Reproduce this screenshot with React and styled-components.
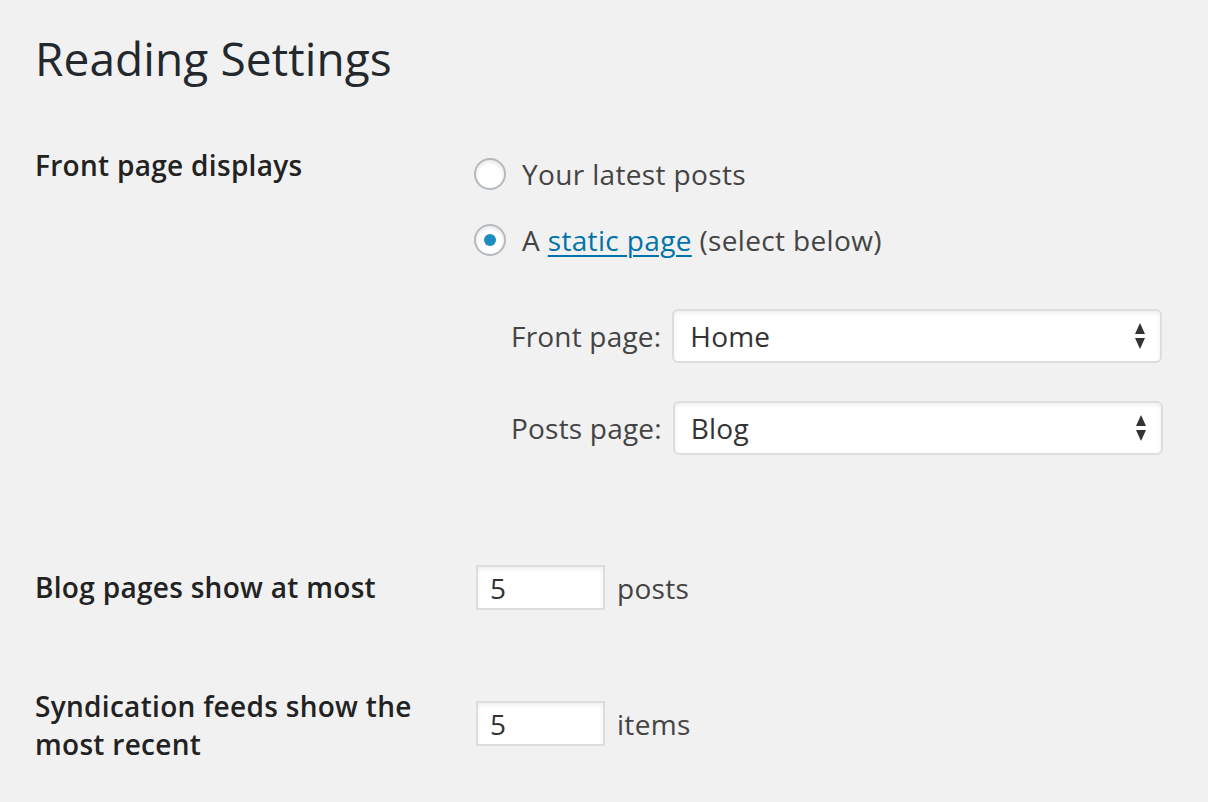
import styled, { createGlobalStyle } from "styled-components";

const GlobalStyle = createGlobalStyle`
  html, body {
    margin: 0;
    padding: 0;
    background: #f1f1f1;
  }
  body {
    font-family: "Open Sans", "Liberation Sans", sans-serif;
    color: #444;
  }
`;

function Radio({ checked, children }) {
  return (
    <RadioRow>
      <RadioCircle $checked={checked} />
      <RadioText>{children}</RadioText>
    </RadioRow>
  );
}

function Select({ value }) {
  return (
    <SelectBox>
      <span>{value}</span>
      <Arrows width="10" height="26" viewBox="0 0 10 26">
        <path d="M5 0 L10 11 L0 11 Z" fill="#333" />
        <path d="M0 15 L10 15 L5 26 Z" fill="#333" />
      </Arrows>
    </SelectBox>
  );
}

function App() {
  return (
    <>
      <GlobalStyle />
      <Wrap>
        <Title>Reading Settings</Title>

        <Row $gap={0}>
          <Label $pad={56}>Front page displays</Label>
          <Field $pad={51}>
            <Radio>Your latest posts</Radio>
            <Radio checked>
              A <Link href="#">static page</Link> (select below)
            </Radio>
            <Pages>
              <PageRow>
                <PageLabel>Front page:</PageLabel>
                <Select value="Home" />
              </PageRow>
              <PageRow>
                <PageLabel>Posts page:</PageLabel>
                <Select value="Blog" />
              </PageRow>
            </Pages>
          </Field>
        </Row>

        <Row $gap={110} $center>
          <Label $nudge={-1}>Blog pages show at most</Label>
          <InlineField>
            <NumberBox>5</NumberBox>
            <Unit>posts</Unit>
          </InlineField>
        </Row>

        <Row $gap={77}>
          <Label>
            Syndication feeds show the
            <br />
            most recent
          </Label>
          <InlineField $pad={14}>
            <NumberBox>5</NumberBox>
            <Unit>items</Unit>
          </InlineField>
        </Row>
      </Wrap>
    </>
  );
}

export default App;

const Wrap = styled.div`
  padding: 0 0 0 35px;
  width: 1208px;
  height: 802px;
  box-sizing: border-box;
  overflow: hidden;
`;

const Title = styled.h1`
  margin: 0;
  padding-top: 27px;
  font-size: 46px;
  font-weight: 400;
  line-height: 62px;
  letter-spacing: 0.1px;
  color: #23282d;
  height: 63px;
`;

const Row = styled.div`
  display: flex;
  align-items: ${(p) => (p.$center ? "center" : "flex-start")};
  margin-top: ${(p) => p.$gap}px;
`;

const Label = styled.div`
  width: 439px;
  flex: none;
  padding-top: ${(p) => p.$pad || 0}px;
  margin-top: ${(p) => p.$nudge || 0}px;
  font-size: 28px;
  font-weight: 600;
  line-height: 38px;
  letter-spacing: 0.3px;
  color: #222;
`;

const Field = styled.div`
  padding-top: ${(p) => p.$pad || 0}px;
`;

const RadioRow = styled.label`
  display: flex;
  align-items: center;
  gap: 16px;
  height: 66px;
`;

const RadioCircle = styled.span`
  width: 32px;
  height: 32px;
  flex: none;
  box-sizing: border-box;
  border-radius: 50%;
  border: 2px solid #b4b9be;
  background: #fff;
  box-shadow: inset 0 2px 4px rgba(0, 0, 0, 0.1);
  display: flex;
  align-items: center;
  justify-content: center;

  &::after {
    content: "";
    display: ${(p) => (p.$checked ? "block" : "none")};
    width: 12px;
    height: 12px;
    border-radius: 50%;
    background: #1e8cbe;
  }
`;

const RadioText = styled.span`
  font-size: 28px;
  letter-spacing: 0.35px;
  color: #444;
`;

const Link = styled.a`
  color: #0073aa;
  text-decoration: underline;
  text-decoration-thickness: 2px;
  text-underline-offset: 4px;
`;

const Pages = styled.div`
  display: flex;
  flex-direction: column;
  gap: 38px;
  padding-top: 36px;
`;

const PageRow = styled.div`
  display: flex;
  align-items: center;
  gap: 11px;
  padding-left: 37px;
`;

const PageLabel = styled.span`
  font-size: 28px;
  letter-spacing: 0.2px;
  color: #444;
`;

const SelectBox = styled.div`
  position: relative;
  width: 490px;
  height: 54px;
  box-sizing: border-box;
  background: #fff;
  border: 2px solid #ddd;
  border-radius: 6px;
  box-shadow: inset 0 2px 4px rgba(0, 0, 0, 0.07);
  display: flex;
  align-items: center;
  padding-left: 16px;
  font-size: 28px;
  letter-spacing: 0.2px;
  color: #333;
`;

const Arrows = styled.svg`
  position: absolute;
  right: 15px;
  top: 12px;
`;

const InlineField = styled.div`
  display: flex;
  align-items: center;
  gap: 12px;
  padding-top: ${(p) => p.$pad || 0}px;
`;

const NumberBox = styled.div`
  width: 129px;
  height: 45px;
  flex: none;
  margin-left: 2px;
  box-sizing: border-box;
  background: #fff;
  border: 2px solid #ddd;
  box-shadow: inset 0 2px 4px rgba(0, 0, 0, 0.07);
  display: flex;
  align-items: center;
  padding-left: 12px;
  font-size: 28px;
  color: #333;
`;

const Unit = styled.span`
  font-size: 28px;
  letter-spacing: 0.3px;
  color: #444;
`;
